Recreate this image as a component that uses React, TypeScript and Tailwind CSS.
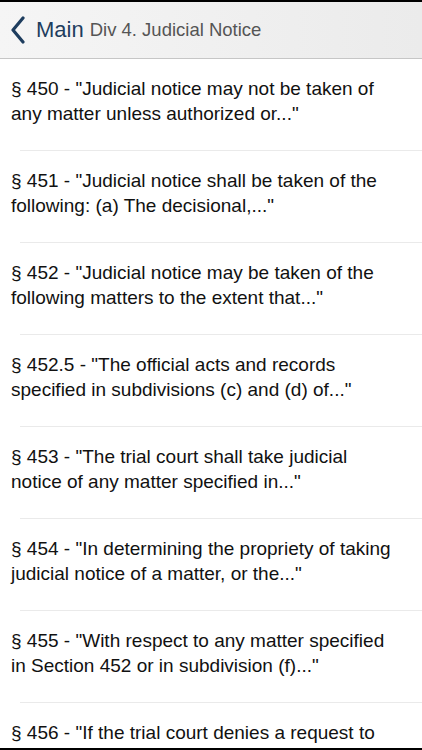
import React from "react";

const sections = [
  { num: "450", text: "Judicial notice may not be taken of any matter unless authorized or..." },
  { num: "451", text: "Judicial notice shall be taken of the following: (a) The decisional,..." },
  { num: "452", text: "Judicial notice may be taken of the following matters to the extent that..." },
  { num: "452.5", text: "The official acts and records specified in subdivisions (c) and (d) of..." },
  { num: "453", text: "The trial court shall take judicial notice of any matter specified in..." },
  { num: "454", text: "In determining the propriety of taking judicial notice of a matter, or the..." },
  { num: "455", text: "With respect to any matter specified in Section 452 or in subdivision (f)..." },
  { num: "456", text: "If the trial court denies a request to take judicial notice of any matter..." },
];

function BackChevron() {
  return (
    <svg width="16" height="28" viewBox="0 0 16 28" fill="none">
      <path d="M13 2 L3 14 L13 26" stroke="#1e3d5e" strokeWidth="3.2" strokeLinecap="round" strokeLinejoin="round" />
    </svg>
  );
}

export default function App() {
  return (
    <div
      className="relative h-[750px] w-[422px] overflow-hidden bg-white"
      style={{ fontFamily: '"Liberation Sans", Arial, sans-serif' }}
    >
      <div className="h-[2px] bg-black" />
      <header className="flex h-[57px] items-center border-b border-[#c6c6c6] bg-gradient-to-r from-[#f5f5f5] to-[#ebebeb] pl-[10px]">
        <BackChevron />
        <span className="ml-[10px] text-[22px] leading-none text-[#1e3d5e]">Main</span>
        <span className="ml-[6px] text-[18.5px] leading-none text-[#555555]">Div 4. Judicial Notice</span>
      </header>
      <ul>
        {sections.map((s) => (
          <li key={s.num} className="h-[92px]">
            <div className="h-[91px] pl-[11px] pr-[27px] pt-[17px]">
              <p className="text-[19px] leading-[25px] text-[#111111]">
                § {s.num} - "{s.text}"
              </p>
            </div>
            <div className="ml-[20px] h-px bg-[#eaeaea]" />
          </li>
        ))}
      </ul>
      <div className="absolute bottom-0 left-0 right-0 h-[2px] bg-black" />
    </div>
  );
}
